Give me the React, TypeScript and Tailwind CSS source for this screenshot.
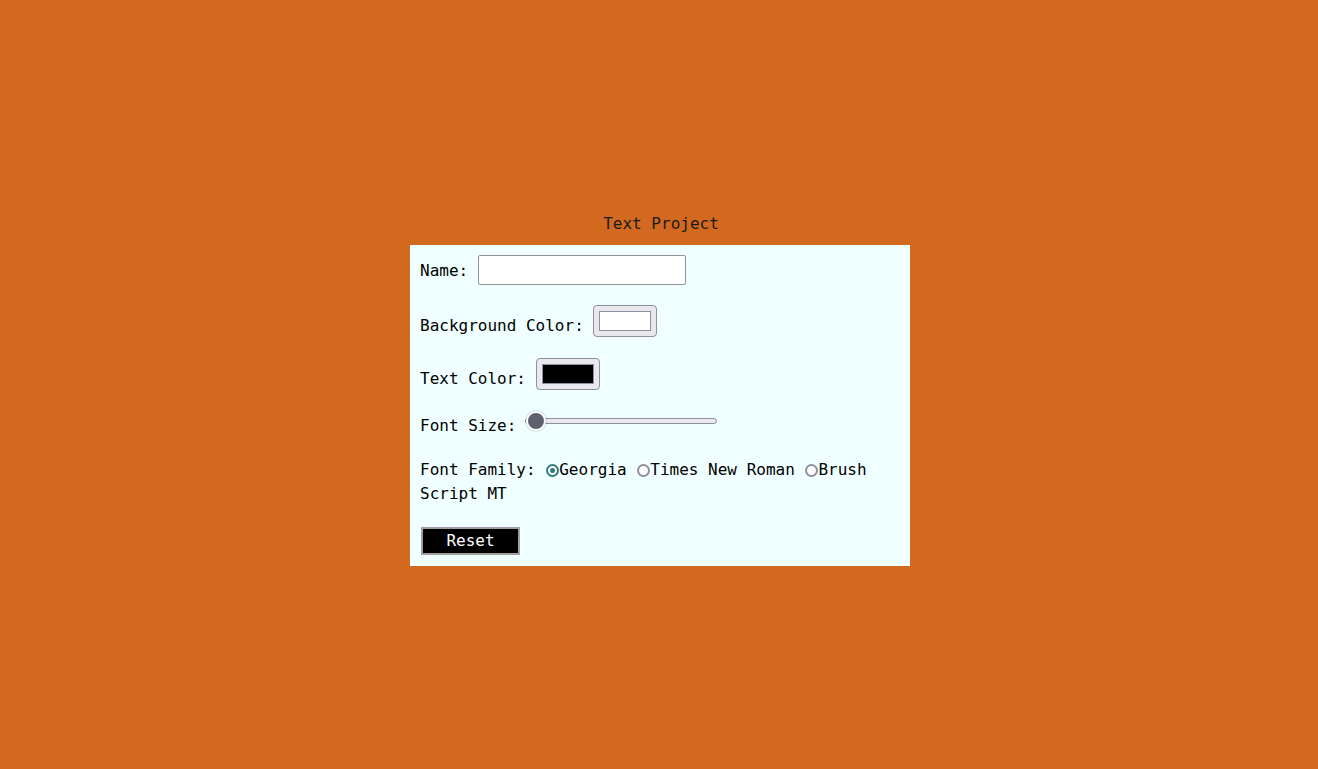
import React, { useState } from "react";

export default function App() {
  const [family, setFamily] = useState("Georgia");
  const [size, setSize] = useState(0);
  const mono = "font-['DejaVu_Sans_Mono',monospace]";

  const Radio = ({ value }: { value: string }) => {
    const on = family === value;
    return (
      <span
        onClick={() => setFamily(value)}
        className="inline-flex w-[14px] h-[14px] items-center justify-center align-[2px] cursor-pointer"
      >
        <span
          className={
            on
              ? "w-[13px] h-[13px] rounded-full border-2 border-[#2f7d7a] bg-white flex items-center justify-center"
              : "w-[13px] h-[13px] rounded-full border-2 border-[#8f8f9d] bg-white flex items-center justify-center"
          }
        >
          <span className={on ? "w-[5px] h-[5px] rounded-full bg-[#2f7d7a]" : "w-[5px] h-[5px] rounded-full bg-transparent"} />
        </span>
      </span>
    );
  };

  return (
    <div className={`min-h-screen bg-[#D2691E] flex flex-col items-center pt-[212px] pl-[2px] text-[16px] leading-[24px] text-black ${mono}`}>
      <div className="h-[24px] mb-[9px] ml-[2px] text-[#1b1b1b]">Text Project</div>
      <div className="w-[500px] bg-[#F0FFFF] px-[10px] pt-[10px] pb-[11px]">
        <div className="h-[30px] flex items-center gap-[10px]">
          <span className="mt-[1px]">Name:</span>
          <input
            type="text"
            className="w-[208px] h-[30px] bg-white border border-[#8f8f9d] rounded-[2px] outline-none px-1"
          />
        </div>

        <div className="mt-[20px] h-[32px] flex items-center gap-[9px]">
          <span className="mt-[9px]">Background Color:</span>
          <span className="w-[64px] h-[32px] rounded-[4px] border border-[#8f8f9d] bg-[#e9e9ed] flex items-center justify-center">
            <span className="w-[52px] h-[20px] border border-[#8f8f9d] bg-white" />
          </span>
        </div>

        <div className="mt-[21px] h-[32px] flex items-center gap-[10px]">
          <span className="mt-[9px]">Text Color:</span>
          <span className="w-[64px] h-[32px] rounded-[4px] border border-[#8f8f9d] bg-[#e9e9ed] flex items-center justify-center">
            <span className="w-[52px] h-[20px] border border-[#8f8f9d] bg-black" />
          </span>
        </div>

        <div className="mt-[21px] h-[20px] flex items-center gap-[9px]">
          <span className="mt-[9px]">Font Size:</span>
          <input
            type="range"
            min={0}
            max={100}
            value={size}
            onChange={(e) => setSize(Number(e.target.value))}
            className="w-[192px] h-[20px] appearance-none bg-transparent cursor-pointer
              [&::-webkit-slider-runnable-track]:h-[6px] [&::-webkit-slider-runnable-track]:rounded-[3px] [&::-webkit-slider-runnable-track]:bg-[#e9e9ed] [&::-webkit-slider-runnable-track]:border [&::-webkit-slider-runnable-track]:border-[#8f8f9d]
              [&::-webkit-slider-thumb]:appearance-none [&::-webkit-slider-thumb]:w-[20px] [&::-webkit-slider-thumb]:h-[20px] [&::-webkit-slider-thumb]:mt-[-8px] [&::-webkit-slider-thumb]:rounded-full [&::-webkit-slider-thumb]:bg-[#5f5f6e] [&::-webkit-slider-thumb]:border-2 [&::-webkit-slider-thumb]:border-white [&::-webkit-slider-thumb]:shadow-[0_0_2px_rgba(0,0,0,0.35)]"
          />
        </div>

        <div className="mt-[27px]">
          Font Family: <Radio value="Georgia" />Georgia <Radio value="Times New Roman" />Times New Roman{" "}
          <Radio value="Brush Script MT" />Brush Script MT
        </div>

        <div className="mt-[21px]">
          <button
            type="button"
            onClick={() => {
              setFamily("Georgia");
              setSize(0);
            }}
            className="ml-[1px] w-[99px] h-[28px] bg-black text-white border-2 border-[#a0a0a0] flex items-center justify-center leading-[24px]"
          >
            Reset
          </button>
        </div>
      </div>
    </div>
  );
}
